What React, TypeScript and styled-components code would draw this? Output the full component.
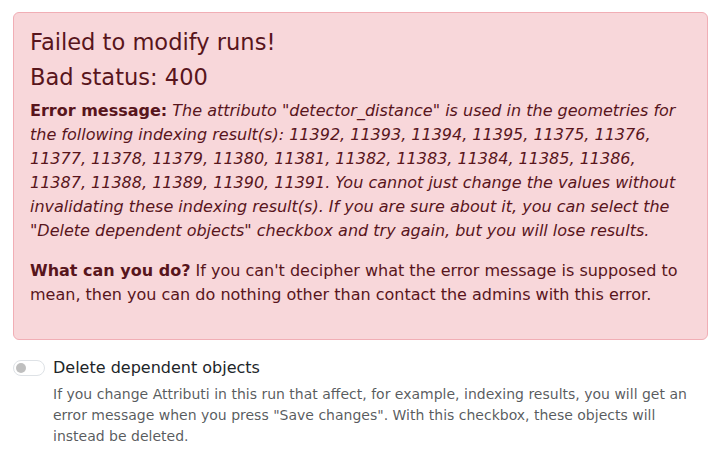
import React from 'react'
import styled, { createGlobalStyle } from 'styled-components'

const GlobalStyle = createGlobalStyle`
  html, body {
    margin: 0;
    padding: 0;
    background: #fff;
  }
  body {
    font-family: "DejaVu Sans", sans-serif;
    font-size: 16px;
    line-height: 1.5;
    color: #212529;
  }
  * { box-sizing: border-box; }
`

const Page = styled.div`
  padding: 12px 13px;
`

const Alert = styled.div`
  padding: 16px;
  margin-bottom: 16px;
  color: #58151c;
  background-color: #f8d7da;
  border: 1px solid #f1aeb5;
  border-radius: 6px;
`

const AlertHeading = styled.h4`
  margin: 0 0 8px;
  font-size: 22.56px;
  font-weight: 500;
  line-height: 1.2;
`

const Paragraph = styled.p`
  margin: 0 0 16px;
`

const Message = styled.em`
  font-style: italic;
`

const SwitchRow = styled.div`
  padding-left: 40px;
  margin-bottom: 2px;
  min-height: 24px;
`

const Toggle = styled.span`
  float: left;
  position: relative;
  width: 32px;
  height: 16px;
  margin-left: -40px;
  margin-top: 4px;
  border: 1px solid #dee2e6;
  border-radius: 32px;
  background: #fff;

  &::after {
    content: '';
    position: absolute;
    left: 2px;
    top: 2px;
    width: 10px;
    height: 10px;
    border-radius: 50%;
    background: rgba(0, 0, 0, 0.25);
  }
`

const SwitchLabel = styled.label`
  display: inline-block;
`

const HelpText = styled.div`
  margin-top: 4px;
  padding-left: 40px;
  font-size: 14px;
  line-height: 1.5;
  color: rgba(33, 37, 41, 0.75);
`

const App = () => {
  return (
    <Page>
      <GlobalStyle />
      <Alert>
        <AlertHeading>Failed to modify runs!</AlertHeading>
        <AlertHeading>Bad status: 400</AlertHeading>
        <Paragraph>
          <strong>Error message:</strong>{' '}
          <Message>
            The attributo "detector_distance" is used in the geometries for the following indexing
            result(s): 11392, 11393, 11394, 11395, 11375, 11376, 11377, 11378, 11379, 11380, 11381,
            11382, 11383, 11384, 11385, 11386, 11387, 11388, 11389, 11390, 11391. You cannot just
            change the values without invalidating these indexing result(s). If you are sure about
            it, you can select the "Delete dependent objects" checkbox and try again, but you will
            lose results.
          </Message>
        </Paragraph>
        <Paragraph>
          <strong>What can you do?</strong> If you can't decipher what the error message is
          supposed to mean, then you can do nothing other than contact the admins with this error.
        </Paragraph>
      </Alert>
      <SwitchRow>
        <Toggle role="switch" aria-checked="false" />
        <SwitchLabel>Delete dependent objects</SwitchLabel>
      </SwitchRow>
      <HelpText>
        If you change Attributi in this run that affect, for example, indexing results, you will
        get an error message when you press "Save changes". With this checkbox, these objects will
        instead be deleted.
      </HelpText>
    </Page>
  )
}

export default App
